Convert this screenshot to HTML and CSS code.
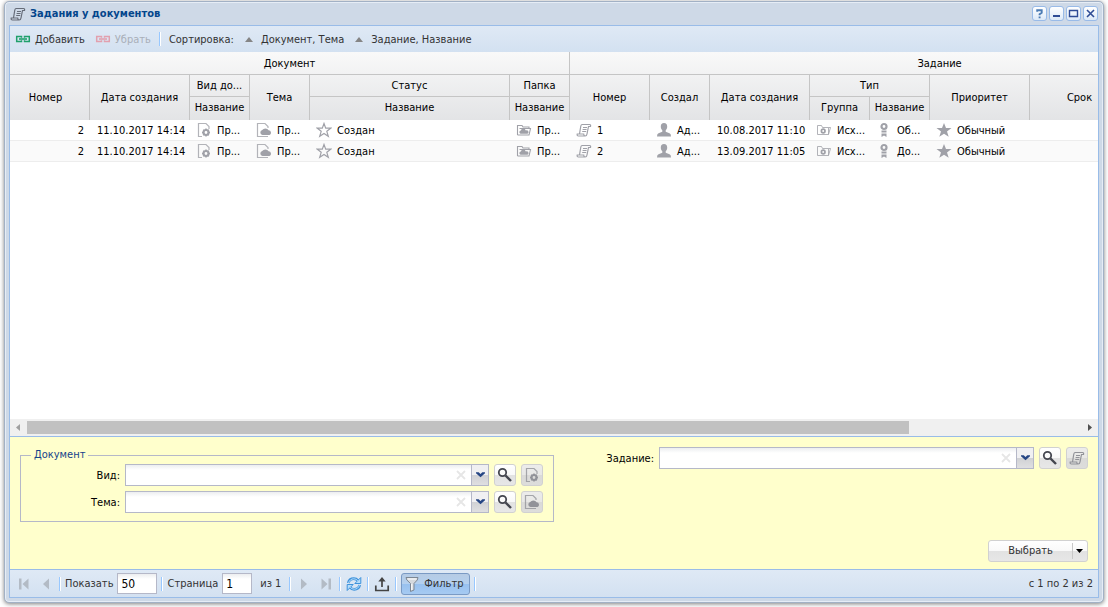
FILE: index.html
```html
<!DOCTYPE html>
<html lang="ru">
<head>
    <meta charset="UTF-8">
    <meta name="viewport" content="width=device-width, initial-scale=1.0">
    <title>Задания у документов</title>
    <link rel="stylesheet" href="styles.css">
</head>
<body>
    <!-- icon sprite -->
    <svg class="sprite" aria-hidden="true">
        <symbol id="scroll" viewBox="0 0 16 16">
            <path d="M5.500 2.500h8q1.500 0 1 2h-2L11 12q-.3 2-1.800 2H2.500Q.8 14 1.200 12h6.500q0 2 1.500 2M3.500 12L4.800 4q.3-1.500 1.500-1.500M7 5.500h4M6.600 7.500h4M6.200 9.500h4" fill="none" stroke="currentColor" stroke-width="1.200"/>
        </symbol>
        <symbol id="chain" viewBox="0 0 16 16">
            <path d="M6.500 6.800V5.600H1.700v4.800h4.800V9.200M9.500 6.800V5.600h4.800v4.800H9.500V9.200" fill="none" stroke="currentColor" stroke-width="1.500"/>
            <path d="M4 8h8" stroke="currentColor" stroke-width="1.600"/>
        </symbol>
        <symbol id="doc-gear" viewBox="0 0 16 16">
            <path d="M6 14.500H2.500v-13H10l3 3V7" fill="none" stroke="currentColor" stroke-width="1.200" opacity=".8"/>
            <circle cx="10" cy="10.500" r="2.500" fill="none" stroke="currentColor" stroke-width="2.200"/>
            <path d="M10 6.500v1.500M10 13v1.500M6 10.500h1.500M12.500 10.500H14M7.200 7.700l1 1M12.800 7.700l-1 1M7.200 13.300l1-1M12.800 13.300l-1-1" stroke="currentColor" stroke-width="1.500"/>
        </symbol>
        <symbol id="doc-cloud" viewBox="0 0 16 16">
            <path d="M12 14.500H1.500v-13H9l3 3V6" fill="none" stroke="currentColor" stroke-width="1.200" opacity=".8"/>
            <path d="M6.500 13a2.500 2.500 0 0 1-.3-4.900A3.800 3.800 0 0 1 12.600 8.200a2.500 2.500 0 0 1 .9 4.800z" fill="currentColor"/>
        </symbol>
        <symbol id="star-line" viewBox="0 0 16 16">
            <path d="M8 1.500l1.700 4.700h5L10.800 9.300l1.500 5L8 11.400l-4.300 2.900 1.500-5L1.300 6.200h5z" fill="none" stroke="currentColor" stroke-width="1.200"/>
        </symbol>
        <symbol id="star-full" viewBox="0 0 16 16">
            <path d="M8 1l2 5h5.500L11 9.400l1.700 5.400L8 11.700l-4.700 3.100L5 9.400.5 6H6z" fill="currentColor"/>
        </symbol>
        <symbol id="folder-cloud" viewBox="0 0 16 16">
            <path d="M1.500 13V3.500H6l1 1.500h6v1.500M1.500 13h11.500l1.500-6.500H3.500" fill="none" stroke="currentColor" stroke-width="1.100"/>
            <path d="M4.500 11.800a1.700 1.700 0 0 1 .3-3.300 2.600 2.600 0 0 1 5 0A1.700 1.700 0 0 1 11.500 11.800z" fill="currentColor"/>
        </symbol>
        <symbol id="folder-gear" viewBox="0 0 16 16">
            <path d="M1.500 12.500v-9h4l1 2h6v7zM12.500 12.500l2-7h-2" fill="none" stroke="currentColor" opacity=".8"/>
            <circle cx="7.200" cy="9" r="1.800" fill="none" stroke="currentColor" stroke-width="1.700"/>
        </symbol>
        <symbol id="user" viewBox="0 0 16 16">
            <path d="M8 1c2.200 0 3.200 1.400 3.200 3.500 0 1.800-.6 3-1.500 3.800v1.500l3.800 1.400q1.500.6 1.500 3.300H1q0-2.700 1.500-3.300l3.800-1.400V8.300C5.400 7.500 4.800 6.300 4.800 4.500 4.800 2.400 5.800 1 8 1z" fill="currentColor"/>
        </symbol>
        <symbol id="medal" viewBox="0 0 16 16">
            <circle cx="8" cy="4.500" r="2.500" fill="none" stroke="currentColor" stroke-width="2.200"/>
            <path d="M5.500 8.500h5v2h-5zM5.500 11.500h5V15L8 13.500 5.500 15z" fill="currentColor"/>
        </symbol>
        <symbol id="search" viewBox="0 0 16 16">
            <circle cx="5.500" cy="5.500" r="3.700" fill="none" stroke="currentColor" stroke-width="1.800"/>
            <path d="M8.500 8.500l5.500 5.500" stroke="currentColor" stroke-width="2.400"/>
        </symbol>
        <symbol id="chevron" viewBox="0 0 10 8">
            <path d="M0 1h3l2 2 2-2h3v1L5 6.500 0 2z" fill="currentColor"/>
        </symbol>
        <symbol id="cross" viewBox="0 0 10 10">
            <path d="M1 1l8 8M9 1l-8 8" stroke="currentColor" stroke-width="1.800"/>
        </symbol>
        <symbol id="up" viewBox="0 0 8 5">
            <path d="M4 0l4 5H0z" fill="currentColor"/>
        </symbol>
        <symbol id="arrow" viewBox="0 0 16 16">
            <path d="M5 2.500v11L11 8z" fill="currentColor"/>
        </symbol>
        <symbol id="arrow-end" viewBox="0 0 16 16">
            <path d="M3.500 2.500v11L9.500 8zM10.500 2.500H13v11h-2.500z" fill="currentColor"/>
        </symbol>
        <symbol id="refresh" viewBox="0 0 16 16">
            <path d="M2.300 7C3 4 5.300 2.700 7.800 2.700q2.500 0 4.200 2M13.700 9c-.7 3-3 4.300-5.500 4.300q-2.500 0-4.200-2" fill="none" stroke="#3f93dc" stroke-width="2.800"/>
            <path d="M14.800 1.500v6H8.800zM1.200 14.500v-6h6z" fill="#b5dcfa" stroke="#3f93dc"/>
            <path d="M2.600 7c.7-2.800 2.700-4.200 5.200-4.200q2.300 0 4 1.900M13.400 9c-.7 2.800-2.700 4.200-5.200 4.200q-2.300 0-4-1.900" fill="none" stroke="#b5dcfa"/>
        </symbol>
        <symbol id="upload" viewBox="0 0 16 16">
            <path d="M1.800 9.500v5h12.400v-5M8 11V4" fill="none" stroke="currentColor" stroke-width="1.700"/>
            <path d="M8 1l3.700 4.500H4.300z" fill="currentColor"/>
        </symbol>
        <symbol id="funnel" viewBox="0 0 16 16">
            <path d="M2 1.500h12q.5 2-4 6V14l-3.500 1.500v-8Q1.500 3.500 2 1.500z" fill="#d5d9de" stroke="#7c8794"/>
            <path d="M3.500 3h9M7.800 8v6" stroke="#fff"/>
        </symbol>
    </svg>

    <div class="window">
        <header class="title-bar">
            <svg class="icon"><use href="#scroll"/></svg>
            <h1>Задания у документов</h1>
            <button class="tool" aria-label="Справка"><svg viewBox="0 0 13 13"><path d="M4.200 4.800V3.200h4.500v2.500L6.600 7.200v1M6.600 9.500v1.700" fill="none" stroke="#4c7cb4" stroke-width="1.900"/></svg></button>
            <button class="tool" aria-label="Свернуть"><svg viewBox="0 0 13 13"><path d="M3 9h7" stroke="#2f4c95" stroke-width="2"/></svg></button>
            <button class="tool" aria-label="Развернуть"><svg viewBox="0 0 13 13"><path d="M2.500 3.500h8v6h-8zM2 3.500h9" fill="none" stroke="#2f4c95" stroke-width="1.400"/></svg></button>
            <button class="tool" aria-label="Закрыть"><svg viewBox="0 0 13 13"><path d="M3 3l7 7M10 3l-7 7" stroke="#2f4c95" stroke-width="1.600"/></svg></button>
        </header>

        <main class="panel">
            <div class="toolbar">
                <button class="flat add"><svg class="icon"><use href="#chain"/></svg>Добавить</button>
                <button class="flat remove" disabled><svg class="icon"><use href="#chain"/></svg>Убрать</button>
                <span class="sep"></span>
                <span class="sort-label">Сортировка:</span>
                <button class="flat sort"><svg class="sort-icon"><use href="#up"/></svg>Документ, Тема</button>
                <button class="flat sort"><svg class="sort-icon"><use href="#up"/></svg>Задание, Название</button>
            </div>

            <div class="grid">
                <table>
                    <colgroup>
                        <col class="w80"><col class="w100"><col class="w60"><col class="w60"><col class="w200"><col class="w60">
                        <col class="w80"><col class="w60"><col class="w100"><col class="w60"><col class="w60"><col class="w100"><col class="w100"><col class="w180">
                    </colgroup>
                    <thead>
                        <tr class="groups">
                            <th colspan="6">Документ</th>
                            <th colspan="8">Задание</th>
                        </tr>
                        <tr>
                            <th rowspan="2" class="number">Номер</th>
                            <th rowspan="2">Дата создания</th>
                            <th>Вид до...</th>
                            <th rowspan="2">Тема</th>
                            <th>Статус</th>
                            <th>Папка</th>
                            <th rowspan="2">Номер</th>
                            <th rowspan="2">Создал</th>
                            <th rowspan="2">Дата создания</th>
                            <th colspan="2">Тип</th>
                            <th rowspan="2">Приоритет</th>
                            <th rowspan="2">Срок</th>
                            <th rowspan="2"></th>
                        </tr>
                        <tr>
                            <th>Название</th>
                            <th>Название</th>
                            <th>Название</th>
                            <th>Группа</th>
                            <th>Название</th>
                        </tr>
                    </thead>
                    <tbody>
                        <tr>
                            <td class="num">2</td>
                            <td class="date">11.10.2017 14:14</td>
                            <td><div class="cell"><svg class="icon"><use href="#doc-gear"/></svg>Пр...</div></td>
                            <td><div class="cell"><svg class="icon"><use href="#doc-cloud"/></svg>Пр...</div></td>
                            <td><div class="cell"><svg class="icon"><use href="#star-line"/></svg>Создан</div></td>
                            <td><div class="cell"><svg class="icon"><use href="#folder-cloud"/></svg>Пр...</div></td>
                            <td><div class="cell"><svg class="icon"><use href="#scroll"/></svg>1</div></td>
                            <td><div class="cell"><svg class="icon"><use href="#user"/></svg>Ад...</div></td>
                            <td class="date">10.08.2017 11:10</td>
                            <td><div class="cell"><svg class="icon"><use href="#folder-gear"/></svg>Исх...</div></td>
                            <td><div class="cell"><svg class="icon"><use href="#medal"/></svg>Об...</div></td>
                            <td><div class="cell"><svg class="icon"><use href="#star-full"/></svg>Обычный</div></td>
                            <td></td>
                            <td></td>
                        </tr>
                        <tr>
                            <td class="num">2</td>
                            <td class="date">11.10.2017 14:14</td>
                            <td><div class="cell"><svg class="icon"><use href="#doc-gear"/></svg>Пр...</div></td>
                            <td><div class="cell"><svg class="icon"><use href="#doc-cloud"/></svg>Пр...</div></td>
                            <td><div class="cell"><svg class="icon"><use href="#star-line"/></svg>Создан</div></td>
                            <td><div class="cell"><svg class="icon"><use href="#folder-cloud"/></svg>Пр...</div></td>
                            <td><div class="cell"><svg class="icon"><use href="#scroll"/></svg>2</div></td>
                            <td><div class="cell"><svg class="icon"><use href="#user"/></svg>Ад...</div></td>
                            <td class="date">13.09.2017 11:05</td>
                            <td><div class="cell"><svg class="icon"><use href="#folder-gear"/></svg>Исх...</div></td>
                            <td><div class="cell"><svg class="icon"><use href="#medal"/></svg>До...</div></td>
                            <td><div class="cell"><svg class="icon"><use href="#star-full"/></svg>Обычный</div></td>
                            <td></td>
                            <td></td>
                        </tr>
                    </tbody>
                </table>
            </div>

            <div class="scrollbar">
                <svg class="scroll-arrow back" viewBox="0 0 17 17"><path d="M10 5v7L6 8.500z"/></svg>
                <div class="track"><div class="thumb"></div></div>
                <svg class="scroll-arrow" viewBox="0 0 17 17"><path d="M7 5v7l4-3.500z"/></svg>
            </div>

            <form class="filter">
                <div class="columns">
                    <fieldset>
                        <legend>Документ</legend>
                        <div class="field">
                            <label for="kind">Вид:</label>
                            <div class="combo">
                                <input type="text" id="kind">
                                <button type="button" class="clear" aria-label="Очистить"><svg><use href="#cross"/></svg></button>
                                <button type="button" class="trigger" aria-label="Открыть список"><svg><use href="#chevron"/></svg></button>
                            </div>
                            <button type="button" class="btn square" aria-label="Найти"><svg class="icon"><use href="#search"/></svg></button>
                            <button type="button" class="btn square" aria-label="Вид документа" disabled><svg class="icon"><use href="#doc-gear"/></svg></button>
                        </div>
                        <div class="field">
                            <label for="subject">Тема:</label>
                            <div class="combo">
                                <input type="text" id="subject">
                                <button type="button" class="clear" aria-label="Очистить"><svg><use href="#cross"/></svg></button>
                                <button type="button" class="trigger" aria-label="Открыть список"><svg><use href="#chevron"/></svg></button>
                            </div>
                            <button type="button" class="btn square" aria-label="Найти"><svg class="icon"><use href="#search"/></svg></button>
                            <button type="button" class="btn square" aria-label="Документ" disabled><svg class="icon"><use href="#doc-cloud"/></svg></button>
                        </div>
                    </fieldset>
                    <div class="field task">
                        <label for="task">Задание:</label>
                        <div class="combo">
                            <input type="text" id="task">
                            <button type="button" class="clear" aria-label="Очистить"><svg><use href="#cross"/></svg></button>
                            <button type="button" class="trigger" aria-label="Открыть список"><svg><use href="#chevron"/></svg></button>
                        </div>
                        <button type="button" class="btn square" aria-label="Найти"><svg class="icon"><use href="#search"/></svg></button>
                        <button type="button" class="btn square" aria-label="Задание" disabled><svg class="icon"><use href="#scroll"/></svg></button>
                    </div>
                </div>
                <div class="actions">
                    <button type="button" class="btn choose"><span>Выбрать</span><svg viewBox="0 0 7 4"><path d="M0 0h7L3.500 4z"/></svg></button>
                </div>
            </form>

            <footer class="toolbar paging">
                <button class="page-btn prev" aria-label="Первая страница" disabled><svg class="icon"><use href="#arrow-end"/></svg></button>
                <button class="page-btn prev" aria-label="Предыдущая страница" disabled><svg class="icon"><use href="#arrow"/></svg></button>
                <span class="sep"></span>
                <label for="limit">Показать</label>
                <input type="text" id="limit" class="limit" value="50">
                <span class="sep"></span>
                <label for="page">Страница</label>
                <input type="text" id="page" class="page" value="1">
                <span class="total">из 1</span>
                <span class="sep"></span>
                <button class="page-btn" aria-label="Следующая страница" disabled><svg class="icon"><use href="#arrow"/></svg></button>
                <button class="page-btn" aria-label="Последняя страница" disabled><svg class="icon"><use href="#arrow-end"/></svg></button>
                <span class="sep"></span>
                <button class="page-btn" aria-label="Обновить"><svg class="icon"><use href="#refresh"/></svg></button>
                <span class="sep"></span>
                <button class="page-btn" aria-label="Экспорт"><svg class="icon"><use href="#upload"/></svg></button>
                <span class="sep"></span>
                <button class="filter-btn" aria-pressed="true"><svg class="icon"><use href="#funnel"/></svg>Фильтр</button>
                <span class="sep"></span>
                <span class="info">с 1 по 2 из 2</span>
            </footer>
        </main>
    </div>
</body>
</html>
```
FILE: styles.css
```css
* {
    box-sizing: border-box;
}
html, body {
    height: 100%;
}
body {
    margin: 0;
    padding: 1px 4px 4px;
    background-color: #fff;
    color: #000;
    overflow: hidden;
}
body, button, input {
    font-family: Tahoma, "DejaVu Sans Condensed", "Noto Sans", sans-serif;
    font-size: 11px;
}
button {
    padding: 0;
    border: 0;
    background: none;
    color: #333;
}
.sprite {
    display: none;
}
.icon {
    width: 16px;
    height: 16px;
    flex: none;
}
.window {
    display: flex;
    flex-direction: column;
    height: 100%;
    padding: 0 4px 4px;
    border: 1px solid #a2b1c5;
    border-radius: 5px;
    background-color: #ced9e7;
    box-shadow: inset 0 0 0 1px #e6edf6, 0 1px 4px rgba(0, 0, 0, 0.5);
}

/* window header */
.title-bar {
    display: flex;
    align-items: center;
    gap: 2px;
    height: 23px;
    padding: 0 1px;
}
.title-bar .icon {
    color: #666c78;
}
.title-bar h1 {
    flex: 1;
    margin: 0;
    padding-left: 2px;
    font-size: 11px;
    color: #04468c;
}
.tool {
    width: 15px;
    height: 15px;
    border: 1px solid #99bbe8;
    border-radius: 3px;
    background: linear-gradient(#fff, #dce9f8);
}
.tool svg {
    display: block;
    width: 13px;
    height: 13px;
}
.panel {
    flex: 1;
    display: flex;
    flex-direction: column;
    min-height: 0;
    border: 1px solid #99bce8;
    background-color: #fff;
}

/* toolbars */
.toolbar {
    display: flex;
    align-items: center;
    flex: none;
    height: 26px;
    padding: 0 5px;
    background: linear-gradient(#dfe9f5, #d3e1f1);
    color: #333;
}
.sep {
    width: 2px;
    height: 14px;
    border-left: 1px solid #98c8ff;
    border-right: 1px solid #fff;
}
.flat {
    display: flex;
    align-items: center;
    gap: 4px;
}
.add .icon {
    color: #1fa06b;
}
.remove {
    margin: 0 8px 0 10px;
    color: #a9afb8;
}
.remove .icon {
    color: #e2a0ae;
}
.sort-label {
    margin-left: 8px;
}
.sort {
    gap: 8px;
    margin-left: 11px;
}
.sort-icon {
    width: 8px;
    height: 5px;
    color: #858585;
}

/* grid */
.grid {
    flex: 1;
    min-height: 0;
    overflow: hidden;
}
table {
    width: 1300px;
    table-layout: fixed;
    border-collapse: separate;
    border-spacing: 0;
}
.w60 { width: 60px; }
.w80 { width: 80px; }
.w100 { width: 100px; }
.w180 { width: 180px; }
.w200 { width: 200px; }
thead {
    background: linear-gradient(#f9f9f9, #e3e4e6);
}
th {
    height: 22px;
    padding: 0;
    border-right: 1px solid #c5c5c5;
    border-bottom: 1px solid #c5c5c5;
    font-weight: normal;
    white-space: nowrap;
}
.groups th {
    height: 23px;
}
thead tr:last-child th, thead th[rowspan] {
    border-bottom: 0;
}
thead tr:last-child th {
    height: 23px;
    padding-bottom: 2px;
}
th.number {
    padding-right: 8px;
}
td {
    height: 21px;
    padding: 0 6px;
    border-bottom: 1px solid #ededed;
    white-space: nowrap;
}
tbody tr:nth-child(2) td {
    background-color: #fafafa;
}
.num {
    text-align: right;
}
.date {
    padding-right: 0;
    padding-left: 7px;
}
.cell {
    display: flex;
    align-items: center;
    gap: 5px;
    height: 20px;
}
.cell .icon {
    color: #a0a1a8;
}
.scrollbar {
    display: flex;
    flex: none;
    height: 17px;
    background-color: #f0f0f0;
}
.scroll-arrow {
    width: 17px;
    height: 17px;
    fill: #505050;
}
.scroll-arrow.back {
    fill: #a0a0a0;
}
.track {
    flex: 1;
    padding: 2px 0;
}
.thumb {
    width: 83.7%;
    height: 13px;
    background-color: #c1c1c1;
}

/* filter form */
.filter {
    flex: none;
    padding: 10px 10px 7px;
    border-top: 1px solid #99bce8;
    border-bottom: 1px solid #99bce8;
    background-color: #ffc;
}
.columns {
    display: grid;
    grid-template-columns: 1fr 1fr;
    align-items: start;
}
fieldset {
    display: flex;
    flex-direction: column;
    gap: 5px;
    min-width: 0;
    margin: 0;
    padding: 1px 10px 8px;
    border: 1px solid #b5b8c8;
}
legend {
    padding: 0 3px;
    line-height: 16px;
    color: #15428b;
}
.field {
    display: flex;
    align-items: center;
    gap: 5px;
}
.field label {
    width: 89px;
    text-align: right;
}
.task label {
    width: 100px;
}
.combo {
    flex: 1;
    display: flex;
    height: 22px;
    border: 1px solid #b5b8c8;
    background: linear-gradient(#eceef0, #fff 5px);
}
.combo input {
    flex: 1;
    min-width: 0;
    padding: 0 4px;
    border: 0;
    background: none;
}
.clear {
    width: 20px;
    color: #e6e6e6;
}
.clear svg {
    display: block;
    width: 10px;
    height: 10px;
    margin: auto;
}
.trigger {
    width: 17px;
    border-left: 1px solid #b5b8c8;
    background: linear-gradient(#f0f0f2 50%, #d0d1d4 50%, #dfdfe1);
    color: #264684;
}
.trigger svg {
    display: block;
    width: 9px;
    height: 8px;
    margin: auto;
}
.btn {
    height: 22px;
    border: 1px solid #d1d1d1;
    border-radius: 3px;
    background: linear-gradient(#fff, #f9f9f9 48%, #e2e2e2 52%, #e7e7e7);
}
.square {
    display: flex;
    align-items: center;
    justify-content: center;
    width: 22px;
    color: #44464f;
}
.square:disabled {
    background: linear-gradient(#ececeb, #e8e8e6 48%, #dadad8 52%, #dddddb);
    color: #929399;
}
.actions {
    display: flex;
    justify-content: flex-end;
    margin-top: 18px;
}
.choose {
    display: flex;
    align-items: center;
    width: 100px;
}
.choose span {
    flex: 1;
    line-height: 16px;
    border-right: 1px solid #c8c8c8;
}
.choose svg {
    width: 7px;
    height: 4px;
    margin: 0 4px 0 3px;
}

/* paging toolbar */
.paging {
    height: 27px;
    gap: 4px;
}
.page-btn {
    width: 18px;
    height: 18px;
    padding: 0 1px;
    color: #444;
}
.page-btn:disabled {
    color: #b3bbc5;
}
.page-btn .icon {
    display: block;
}
.prev .icon {
    transform: scaleX(-1);
}
.paging input {
    height: 21px;
    padding: 0 3px;
    border: 1px solid #b5b8c8;
    background: linear-gradient(#eceef0, #fff 5px);
    font-size: 12px;
}
.limit {
    width: 40px;
}
.page {
    width: 30px;
}
.total {
    margin: 0 4px;
}
.filter-btn {
    display: flex;
    align-items: center;
    gap: 4px;
    height: 22px;
    padding: 0 5px 0 2px;
    border: 1px solid #7a9ac4;
    border-radius: 3px;
    background: linear-gradient(#b6cbe4, #b4d0ef 48%, #98c1ef 52%, #a6caf2);
}
.info {
    margin-left: auto;
}
```
